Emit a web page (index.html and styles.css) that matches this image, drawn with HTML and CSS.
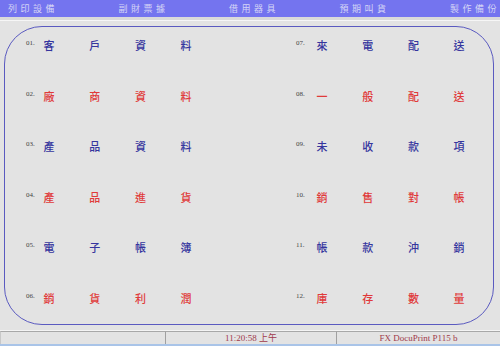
FILE: index.html
```html
<!DOCTYPE html>
<html lang="zh-Hant">
<head>
    <meta charset="UTF-8">
    <title>主選單</title>
    <link rel="stylesheet" href="styles.css">
</head>
<body>

    <!-- Barra de menu superior -->
    <div class="menubar">
        <span class="menu-item">列印設備</span>
        <span class="menu-item">副財票據</span>
        <span class="menu-item">借用器具</span>
        <span class="menu-item">預期叫貨</span>
        <span class="menu-item">製作備份</span>
    </div>
    <div class="menu-sep"></div>

    <!-- Panel redondeado con las opciones -->
    <div class="panel">
        <div class="item blue"><span class="num">01.</span><span class="word"><span>客</span><span>戶</span><span>資</span><span>料</span></span></div>
        <div class="item red"><span class="num">02.</span><span class="word"><span>廠</span><span>商</span><span>資</span><span>料</span></span></div>
        <div class="item blue"><span class="num">03.</span><span class="word"><span>產</span><span>品</span><span>資</span><span>料</span></span></div>
        <div class="item red"><span class="num">04.</span><span class="word"><span>產</span><span>品</span><span>進</span><span>貨</span></span></div>
        <div class="item blue"><span class="num">05.</span><span class="word"><span>電</span><span>子</span><span>帳</span><span>簿</span></span></div>
        <div class="item red"><span class="num">06.</span><span class="word"><span>銷</span><span>貨</span><span>利</span><span>潤</span></span></div>

        <div class="item blue right"><span class="num">07.</span><span class="word"><span>來</span><span>電</span><span>配</span><span>送</span></span></div>
        <div class="item red right"><span class="num">08.</span><span class="word"><span>一</span><span>般</span><span>配</span><span>送</span></span></div>
        <div class="item blue right"><span class="num">09.</span><span class="word"><span>未</span><span>收</span><span>款</span><span>項</span></span></div>
        <div class="item red right"><span class="num">10.</span><span class="word"><span>銷</span><span>售</span><span>對</span><span>帳</span></span></div>
        <div class="item blue right"><span class="num">11.</span><span class="word"><span>帳</span><span>款</span><span>沖</span><span>銷</span></span></div>
        <div class="item red right"><span class="num">12.</span><span class="word"><span>庫</span><span>存</span><span>數</span><span>量</span></span></div>
    </div>

    <!-- Barra de estado -->
    <div class="statusbar">
        <div class="cell"></div>
        <div class="cell center">11:20:58 上午</div>
        <div class="cell center">FX DocuPrint P115 b</div>
    </div>

</body>
</html>
```

FILE: styles.css
```css
/* Estilos generales */
body {
    margin: 0;
    width: 500px;
    height: 346px;
    background-color: #e3e3e3;
    font-family: 'Liberation Serif', 'Noto Sans CJK TC', serif;
    overflow: hidden;
}

/* Menu superior */
.menubar {
    height: 17px;
    background-color: #7474ef;
    display: flex;
    justify-content: space-between;
    align-items: center;
    padding: 0 0 0 8px;
}

.menu-item {
    font-family: 'Noto Sans CJK TC', sans-serif;
    font-size: 9px;
    letter-spacing: 3.5px;
    color: #d4d4f6;
    line-height: 1;
}

.menu-sep {
    height: 3px;
    border-bottom: 1px solid #f6f6f6;
    background-color: #dadada;
}

/* Panel con borde redondeado */
.panel {
    box-sizing: border-box;
    margin: 5px 0 0 4px;
    width: 490px;
    height: 299px;
    border: 1.5px solid #5a5ac0;
    border-radius: 38px;
    padding: 8px 0 0 21px;
    display: grid;
    grid-template-columns: 270px 1fr;
    grid-template-rows: repeat(6, 20px);
    row-gap: 30.6px;
    grid-auto-flow: column;
}

.item {
    display: flex;
    align-items: center;
}

.num {
    width: 17px;
    font-size: 7px;
    color: #444;
    margin-top: -4px;
}

.right .num {
    width: 20px;
}

.word {
    display: flex;
    gap: 33.7px;
}

.word span {
    width: 12px;
    text-align: center;
    font-family: 'Noto Sans CJK TC', sans-serif;
    font-size: 11px;
    font-weight: 500;
}

.blue .word {
    color: #35359e;
}

.red .word {
    color: #e03a3a;
}

/* Barra de estado */
.statusbar {
    margin-top: 5px;
    height: 13px;
    display: flex;
    border-top: 1px solid #f4f4f4;
    border-bottom: 2px solid #a9c4e8;
}

.cell {
    box-sizing: border-box;
    height: 13px;
    border-left: 1px solid #a0a0a0;
    border-top: 1px solid #a8a8a8;
    font-size: 9px;
    line-height: 12px;
    color: #a03a4a;
}

.cell:nth-child(1) {
    width: 165px;
    border-left: 1px solid #c8c8c8;
}

.cell:nth-child(2) {
    width: 171px;
}

.cell:nth-child(3) {
    flex: 1;
}

.center {
    text-align: center;
}
```
